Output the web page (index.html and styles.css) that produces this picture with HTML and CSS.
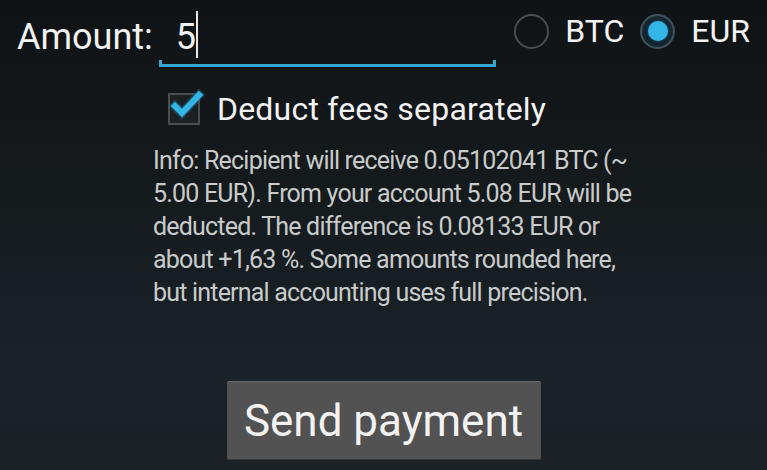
FILE: index.html
```html
<!DOCTYPE html>
<html>
<head>
<meta charset="utf-8">
<link rel="stylesheet" href="styles.css">
</head>
<body>
<div class="screen">
  <div class="top-row">
    <span class="label">Amount:</span>
    <div class="field">
      <span class="value">5</span><span class="cursor"></span>
    </div>
    <div class="radios">
      <span class="radio"></span><span class="radio-label">BTC</span>
      <span class="radio checked"><span class="dot"></span></span><span class="radio-label">EUR</span>
    </div>
  </div>
  <div class="check-row">
    <span class="checkbox">
      <svg width="40" height="40" viewBox="0 0 40 40">
        <path d="M8 20 L15 27 L32 9" fill="none" stroke="#1b6d8f" stroke-width="9" stroke-linecap="square" opacity="0.5"/>
        <path d="M8 20 L15 27 L32 9" fill="none" stroke="#33b5e5" stroke-width="6" stroke-linecap="square"/>
      </svg>
    </span>
    <span class="check-label">Deduct fees separately</span>
  </div>
  <p class="info">Info: Recipient will receive 0.05102041 BTC (~ 5.00 EUR). From your account 5.08 EUR will be deducted. The difference is 0.08133 EUR or about +1,63 %. Some amounts rounded here, but internal accounting uses full precision.</p>
  <div class="actions">
    <button class="send">Send payment</button>
  </div>
</div>
</body>
</html>
```
FILE: styles.css
```css
html, body {
  margin: 0;
  padding: 0;
}
body {
  width: 767px;
  height: 470px;
  overflow: hidden;
  background: linear-gradient(to bottom, #101315 0%, #151a1c 40%, #19222a 78%, #1b2124 100%);
  font-family: Roboto, "Noto Sans", sans-serif;
  color: #f2f2f2;
}
.screen {
  display: flex;
  flex-direction: column;
  height: 470px;
}
.top-row {
  display: flex;
  align-items: flex-start;
  height: 70px;
}
.label {
  font-size: 36px;
  margin-left: 17px;
  margin-top: 13px;
  line-height: 48px;
}
.field {
  position: relative;
  margin-left: 6px;
  width: 337px;
  height: 67px;
  box-sizing: border-box;
  display: flex;
  align-items: flex-start;
  padding-left: 17px;
}
.field::after {
  content: "";
  position: absolute;
  left: 0;
  right: 0;
  bottom: 0;
  height: 7px;
  border: 3px solid #33a8d6;
  border-top: none;
  box-sizing: border-box;
}
.value {
  font-size: 36px;
  line-height: 48px;
  margin-top: 13px;
  letter-spacing: -1px;
}
.cursor {
  width: 2px;
  height: 47px;
  background: #e8e8e8;
  margin-top: 11px;
  margin-left: 1px;
}
.radios {
  display: flex;
  align-items: center;
  margin-left: auto;
  margin-right: 17px;
  margin-top: 12px;
}
.radio {
  width: 35px;
  height: 35px;
  border-radius: 50%;
  border: 2px solid #4a4c4d;
  box-sizing: border-box;
  display: flex;
  align-items: center;
  justify-content: center;
}
.radio.checked {
  border-color: #3d5360;
  margin-left: 16px;
  background: radial-gradient(circle, #13202a 55%, #1a2a34 70%);
}
.dot {
  width: 20px;
  height: 20px;
  border-radius: 50%;
  background: #33b5e5;
  box-shadow: 0 0 3px #1d6f8f;
}
.radio-label {
  font-size: 32px;
  margin-left: 16px;
}
.check-row {
  display: flex;
  align-items: center;
  margin-left: 168px;
  margin-top: 20px;
}
.checkbox {
  position: relative;
  width: 32px;
  height: 32px;
  border: 2px solid #4a4c4d;
  box-sizing: border-box;
  background: #1c2022;
}
.checkbox svg {
  position: absolute;
  left: -3px;
  top: -9px;
}
.check-label {
  font-size: 32px;
  margin-left: 17px;
  letter-spacing: 0.2px;
}
.info {
  width: 500px;
  margin: 16px 0 0 153px;
  font-size: 25px;
  line-height: 33px;
  letter-spacing: -0.8px;
  color: #c9cbcb;
}
.actions {
  display: flex;
  justify-content: center;
  margin-top: auto;
  margin-bottom: 10px;
}
.send {
  width: 314px;
  height: 79px;
  background: #525252;
  border: none;
  border-top: 1px solid #6a6a6a;
  border-bottom: 1px solid #3a3a3a;
  border-radius: 2px;
  color: #f2f2f2;
  font-family: Roboto, "Noto Sans", sans-serif;
  font-size: 44px;
  padding: 0;
}
```
